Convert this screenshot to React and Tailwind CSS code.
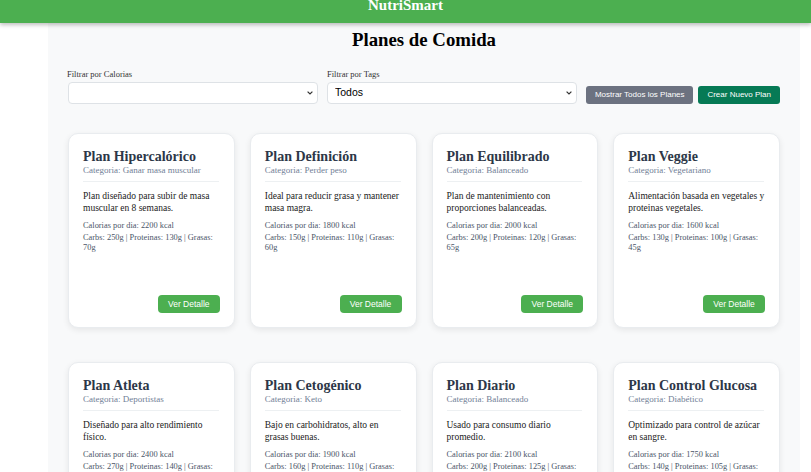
import React from "react";

const plans = [
  { name: "Plan Hipercalórico", cat: "Ganar masa muscular", desc: "Plan diseñado para subir de masa muscular en 8 semanas.", cal: 2200, c: 250, p: 130, g: 70 },
  { name: "Plan Definición", cat: "Perder peso", desc: "Ideal para reducir grasa y mantener masa magra.", cal: 1800, c: 150, p: 110, g: 60 },
  { name: "Plan Equilibrado", cat: "Balanceado", desc: "Plan de mantenimiento con proporciones balanceadas.", cal: 2000, c: 200, p: 120, g: 65 },
  { name: "Plan Veggie", cat: "Vegetariano", desc: "Alimentación basada en vegetales y proteinas vegetales.", cal: 1600, c: 130, p: 100, g: 45 },
  { name: "Plan Atleta", cat: "Deportistas", desc: "Diseñado para alto rendimiento físico.", cal: 2400, c: 270, p: 140, g: 80 },
  { name: "Plan Cetogénico", cat: "Keto", desc: "Bajo en carbohidratos, alto en grasas buenas.", cal: 1900, c: 160, p: 110, g: 90 },
  { name: "Plan Diario", cat: "Balanceado", desc: "Usado para consumo diario promedio.", cal: 2100, c: 200, p: 125, g: 70 },
  { name: "Plan Control Glucosa", cat: "Diabético", desc: "Optimizado para control de azúcar en sangre.", cal: 1750, c: 140, p: 105, g: 60 },
];

const serif = { fontFamily: '"Liberation Serif", "Times New Roman", serif' };
const sans = { fontFamily: '"Liberation Sans", Arial, sans-serif' };

function Card({ p }) {
  return (
    <div className="bg-white rounded-[10px] border border-[#e9ecef] shadow-[0_2px_6px_rgba(0,0,0,0.08)] pl-[14px] pr-[13px] pt-[14px] pb-[14px] h-[195px] flex flex-col">
      <div className="text-[14px] font-bold leading-[17px] text-[#2d3748] whitespace-nowrap">{p.name}</div>
      <div className="text-[9px] leading-[11px] text-[#718096]">Categoria: {p.cat}</div>
      <div className="h-px bg-[#edf0f2] mt-[5px] mb-[8px] mr-[2px]" />
      <div className="text-[9.5px] leading-[12px] text-[#1a1a1a]">{p.desc}</div>
      <div className="text-[8.4px] leading-[10px] text-[#4a5568] mt-[7px]">Calorias por dia: {p.cal} kcal</div>
      <div className="text-[8.4px] leading-[10px] text-[#4a5568] mt-[2px]">
        Carbs: {p.c}g | Proteinas: {p.p}g | Grasas: {p.g}g
      </div>
      <div className="mt-auto flex justify-end pr-px">
        <button className="bg-[#4caf50] text-white text-[8.5px] h-[18px] w-[62px] rounded-[4px]" style={sans}>
          Ver Detalle
        </button>
      </div>
    </div>
  );
}

function Chevron() {
  return (
    <svg className="absolute right-[5px] top-[9px] pointer-events-none" width="6" height="4" viewBox="0 0 6 4">
      <path d="M0.6 0.6 L3 3 L5.4 0.6" fill="none" stroke="#333" strokeWidth="1.2" />
    </svg>
  );
}

export default function App() {
  return (
    <div className="w-[811px] h-[472px] overflow-hidden bg-white" style={serif}>
      <div className="relative z-10 h-[23px] bg-[#4caf50] shadow-[0_2px_4px_rgba(0,0,0,0.25)] flex justify-center">
        <div className="text-white font-bold text-[15px] leading-[15px] -mt-[2px]">NutriSmart</div>
      </div>
      <div className="ml-[48px] w-[752px] bg-[#f8f9fa] px-[20px] pt-[5px] min-h-[449px]">
        <h1 className="text-center text-[18.8px] font-bold leading-[24px] text-black">Planes de Comida</h1>
        <div className="flex items-end mt-[17px]">
          <div className="flex flex-col w-[250px]">
            <label className="text-[8.5px] leading-[10px] text-[#333] mb-[3px] -ml-px">Filtrar por Calorias</label>
            <div className="relative">
              <select
                className="block appearance-none h-[22px] w-[250px] rounded-[4px] border border-[#dee2e6] bg-white text-[10px] px-[6px] outline-none"
                style={sans}
                defaultValue=""
              >
                <option value=""></option>
              </select>
              <Chevron />
            </div>
          </div>
          <div className="flex flex-col w-[250px] ml-[9px]">
            <label className="text-[8.5px] leading-[10px] text-[#333] mb-[3px]">Filtrar por Tags</label>
            <div className="relative">
              <select
                className="block appearance-none h-[22px] w-[250px] rounded-[4px] border border-[#dee2e6] bg-white text-[10.5px] px-[7px] text-black outline-none"
                style={sans}
                defaultValue="todos"
              >
                <option value="todos">Todos</option>
              </select>
              <Chevron />
            </div>
          </div>
          <button className="ml-[9px] h-[18px] w-[108px] rounded-[3px] bg-[#6c7280] text-white text-[8px]" style={sans}>
            Mostrar Todos los Planes
          </button>
          <button className="ml-[5px] h-[18px] w-[82px] rounded-[3px] bg-[#067a55] text-white text-[8px]" style={sans}>
            Crear Nuevo Plan
          </button>
        </div>
        <div className="grid grid-cols-4 gap-x-[15px] gap-y-[34px] mt-[29px]">
          {plans.map((p) => (
            <Card key={p.name} p={p} />
          ))}
        </div>
      </div>
    </div>
  );
}
